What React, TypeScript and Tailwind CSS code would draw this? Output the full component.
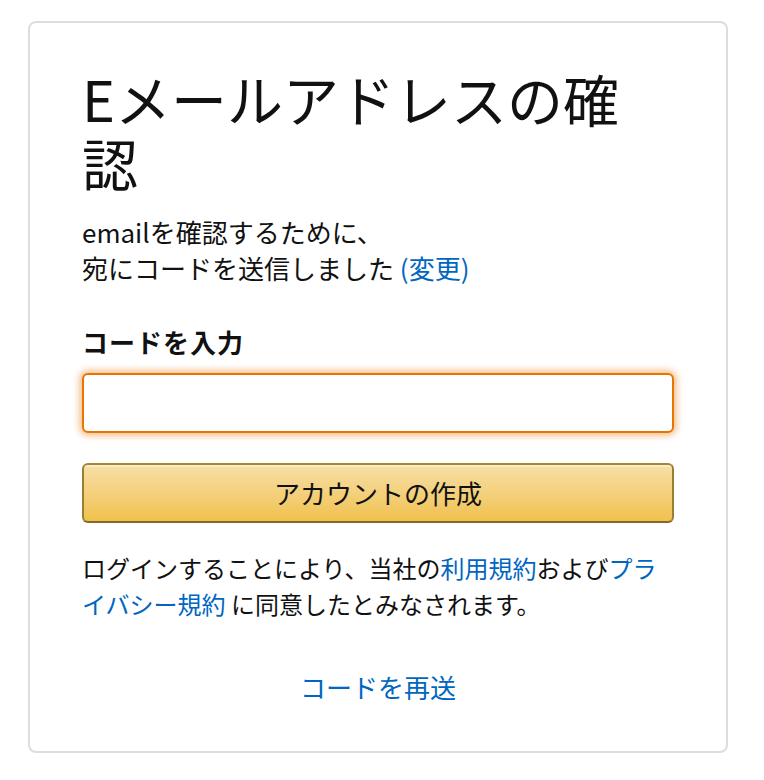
export default function App() {
  return (
    <div className="min-h-[780px] w-full bg-white pt-[21px] [font-family:'Noto_Sans_CJK_JP','Noto_Sans',sans-serif] text-[#111]">
      <div className="mx-[28px] w-[700px] rounded-[8px] border-2 border-[#ddd] px-[52px] pt-[43px] pb-[46px]">
        <h1 className="text-[56px] leading-[64px] font-normal">
          Eメールアドレスの確
          <br />認
        </h1>

        <p className="mt-[20px] text-[26px] leading-[36px]">
          emailを確認するために、
          <br />
          宛にコードを送信しました{" "}
          <a href="#" className="text-[#0066c0]">
            (変更)
          </a>
        </p>

        <label htmlFor="code" className="mt-[38px] block text-[26px] leading-[36px] font-bold tracking-[1px]">
          コードを入力
        </label>
        <input
          id="code"
          type="text"
          className="mt-[13px] block h-[60px] w-full rounded-[6px] border-2 border-[#e77600] bg-white px-3 text-[26px] shadow-[0_0_6px_3px_rgba(228,121,17,0.45)] outline-none"
        />

        <button
          type="button"
          className="mt-[30px] block h-[60px] w-full rounded-[6px] border-2 border-t-[#a88734] border-x-[#9c7e31] border-b-[#846a29] bg-gradient-to-b from-[#f7dfa5] to-[#f0c14b] text-[26px] leading-[36px] text-[#111] shadow-[inset_0_2px_0_rgba(255,255,255,0.4)]"
        >
          アカウントの作成
        </button>

        <p className="mt-[27px] text-[24px] leading-[36px]">
          ログインすることにより、当社の
          <a href="#" className="text-[#0066c0]">
            利用規約
          </a>
          および
          <a href="#" className="text-[#0066c0]">
            プライバシー規約
          </a>{" "}
          に同意したとみなされます。
        </p>

        <div className="mt-[47px] text-center text-[26px] leading-[36px]">
          <a href="#" className="text-[#0066c0]">
            コードを再送
          </a>
        </div>
      </div>
    </div>
  );
}
